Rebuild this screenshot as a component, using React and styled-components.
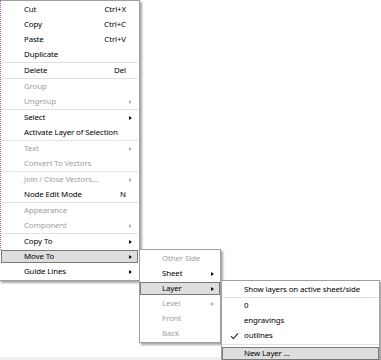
import React from "react";
import styled, { createGlobalStyle } from "styled-components";

const GlobalStyle = createGlobalStyle`
  html, body { margin: 0; padding: 0; background: #fff; }
  body { font-family: "Noto Sans", "Liberation Sans", sans-serif; }
`;

const Page = styled.div`
  position: relative;
  width: 381px;
  height: 360px;
  overflow: hidden;
  background: linear-gradient(to bottom, #fff 357px, #efefef 357px);
`;

const GuideLine = styled.div`
  position: absolute;
  left: 0;
  top: 0;
  height: ${(p) => p.$h}px;
  border-left: 1px dotted #b45fc0;
  z-index: 2;
`;

const Cascade = styled.div`
  display: flex;
  align-items: flex-start;
`;

const Menu = styled.div`
  flex: none;
  display: flex;
  flex-direction: column;
  box-sizing: border-box;
  width: ${(p) => p.$w}px;
  margin-top: ${(p) => p.$top}px;
  margin-left: ${(p) => p.$left || 0}px;
  padding: 1px ${(p) => p.$px || 0}px;
  background: #fff;
  border: 1px solid #a0a0a0;
  box-shadow: 2px 2px 2px rgba(0, 0, 0, 0.35);
  font-size: 7.9px;
  letter-spacing: -0.12px;
  color: #000;
`;

const Item = styled.div`
  display: grid;
  grid-template-columns: ${(p) => p.$gutter}px 1fr auto 12px;
  align-items: center;
  box-sizing: border-box;
  height: 13px;
  margin: 1px 0;
  color: ${(p) => (p.$disabled ? "#a0a0a0" : "#000")};
  background: ${(p) => (p.$active ? "#dedede" : "transparent")};
  outline: ${(p) => (p.$active ? "1px solid #7a7a7a" : "none")};
  outline-offset: -1px;
  white-space: nowrap;
  line-height: 13px;
`;

const Mark = styled.span`
  display: flex;
  justify-content: center;
  align-items: center;
  padding-left: 2px;
`;

const Shortcut = styled.span`
  text-align: right;
`;

const Arrow = styled.span`
  justify-self: start;
  margin-left: 3px;
  width: 0;
  height: 0;
  border-left: 3px solid ${(p) => (p.$disabled ? "#b0b0b0" : "#111")};
  border-top: 2.5px solid transparent;
  border-bottom: 2.5px solid transparent;
`;

const Separator = styled.div`
  height: 1px;
  margin: ${(p) => (p.$wide ? "1px 0" : "0")};
  background: #e2e2e2;
`;

const Check = () => (
  <svg width="9" height="8" viewBox="0 0 9 8">
    <path d="M1 4.2 L3.4 6.6 L8 1.4" fill="none" stroke="#333" strokeWidth="1.2" />
  </svg>
);

const mainItems = [
  { label: "Cut", shortcut: "Ctrl+X" },
  { label: "Copy", shortcut: "Ctrl+C" },
  { label: "Paste", shortcut: "Ctrl+V" },
  { label: "Duplicate" },
  { sep: true },
  { label: "Delete", shortcut: "Del" },
  { sep: true },
  { label: "Group", disabled: true },
  { label: "Ungroup", disabled: true, arrow: true },
  { sep: true },
  { label: "Select", arrow: true },
  { label: "Activate Layer of Selection" },
  { sep: true },
  { label: "Text", disabled: true, arrow: true },
  { label: "Convert To Vectors", disabled: true },
  { sep: true },
  { label: "Join / Close Vectors...", disabled: true, arrow: true },
  { label: "Node Edit Mode", shortcut: "N" },
  { sep: true },
  { label: "Appearance", disabled: true },
  { label: "Component", disabled: true, arrow: true },
  { sep: true },
  { label: "Copy To", arrow: true },
  { label: "Move To", arrow: true, active: true },
  { label: "Guide Lines", arrow: true },
];

const moveItems = [
  { label: "Other Side", disabled: true },
  { label: "Sheet", arrow: true },
  { label: "Layer", arrow: true, active: true },
  { label: "Level", disabled: true, arrow: true },
  { label: "Front", disabled: true },
  { label: "Back", disabled: true },
];

const layerItems = [
  { label: "Show layers on active sheet/side" },
  { sep: true },
  { label: "0" },
  { label: "engravings" },
  { label: "outlines", checked: true },
  { sep: true, wide: true },
  { label: "New Layer ...", active: true },
];

function MenuList({ items, gutter }) {
  return items.map((it, i) =>
    it.sep ? (
      <Separator key={i} $wide={it.wide} />
    ) : (
      <Item key={i} $gutter={gutter} $disabled={it.disabled} $active={it.active}>
        <Mark>{it.checked && <Check />}</Mark>
        <span>{it.label}</span>
        <Shortcut>{it.shortcut}</Shortcut>
        {it.arrow ? <Arrow $disabled={it.disabled} /> : <span />}
      </Item>
    )
  );
}

export default function App() {
  return (
    <>
      <GlobalStyle />
      <Page>
        <GuideLine $h={250} />
        <Cascade>
          <Menu $w={141} $top={0} $left={-1} $px={1}>
            <MenuList items={mainItems} gutter={23} />
          </Menu>
          <Menu $w={82} $top={249} $left={-1}>
            <MenuList items={moveItems} gutter={22} />
          </Menu>
          <Menu $w={159} $top={280}>
            <MenuList items={layerItems} gutter={22} />
          </Menu>
        </Cascade>
      </Page>
    </>
  );
}
